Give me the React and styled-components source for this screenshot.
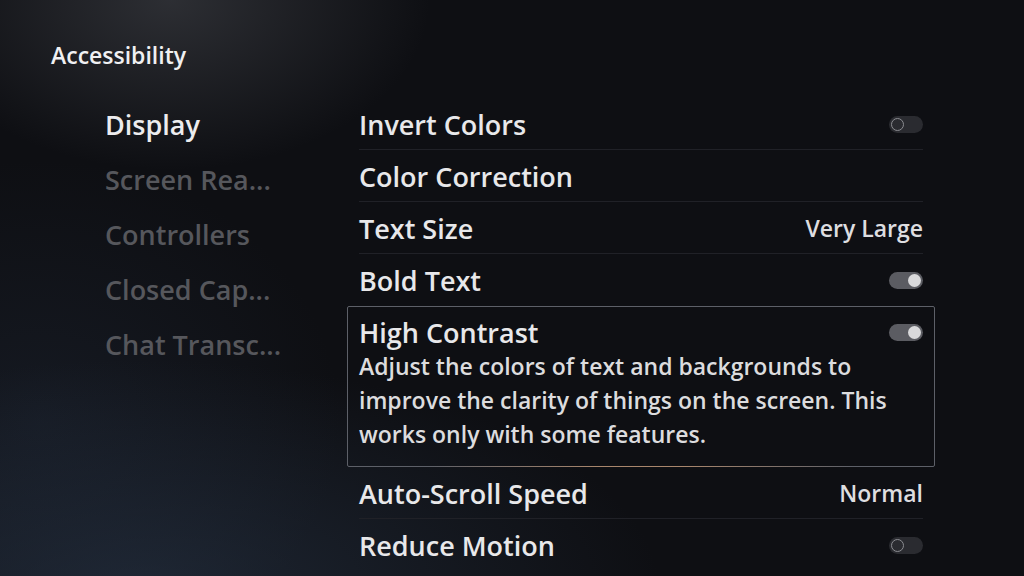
import React from 'react';
import styled, { createGlobalStyle } from 'styled-components';

const GlobalStyle = createGlobalStyle`
  html, body {
    margin: 0;
    padding: 0;
    background: #0e0f13;
  }
  * {
    box-sizing: border-box;
  }
`;

const Screen = styled.main`
  width: 100vw;
  height: 100vh;
  overflow: hidden;
  font-family: 'Open Sans', 'Noto Sans', sans-serif;
  color: #e4e4e6;
  background:
    radial-gradient(ellipse 260px 170px at 170px 0px, rgba(70, 72, 78, 0.55), transparent 100%),
    radial-gradient(ellipse 520px 230px at 140px 590px, rgba(42, 56, 76, 0.55), transparent 100%),
    radial-gradient(ellipse 300px 260px at 40px 420px, rgba(30, 38, 52, 0.45), transparent 100%),
    #0e0f13;
`;

const Title = styled.h1`
  margin: 0;
  padding: 39px 0 0 51px;
  height: 97px;
  font-size: 23px;
  line-height: 32px;
  font-weight: 600;
  color: #f0f0f2;
`;

const Body = styled.div`
  display: grid;
  grid-template-columns: 242px 588px;
  padding-left: 105px;
`;

const Nav = styled.nav`
  display: flex;
  flex-direction: column;
`;

const NavItem = styled.div`
  height: 55px;
  line-height: 55px;
  font-size: 27px;
  font-weight: 600;
  color: ${(p) => (p.$active ? '#ececee' : '#56575c')};
  white-space: nowrap;
`;

const List = styled.section`
  display: flex;
  flex-direction: column;
  margin-top: 1px;
`;

const Row = styled.div`
  position: relative;
  height: 52px;
  padding: 0 12px;
  display: flex;
  align-items: center;
  justify-content: space-between;

  &::after {
    content: '';
    position: absolute;
    left: 12px;
    right: 12px;
    bottom: 0;
    height: 1px;
    background: ${(p) => (p.$last ? 'transparent' : '#202127')};
  }
`;

const Label = styled.span`
  font-size: 27px;
  font-weight: 600;
  color: #e8e8ea;
`;

const Value = styled.span`
  font-size: 23px;
  font-weight: 600;
  color: #dedee0;
`;

const FocusBox = styled.div`
  position: relative;
  border: 1px solid #5d6068;
  border-radius: 2px;
  padding: 0 11px 15px;

  &::after {
    content: '';
    position: absolute;
    left: 80px;
    right: 80px;
    bottom: -1px;
    height: 1px;
    background: linear-gradient(90deg, transparent, rgba(200, 150, 110, 0.7) 40%, rgba(200, 150, 110, 0.7) 60%, transparent);
  }
`;

const FocusHead = styled.div`
  height: 42px;
  display: flex;
  align-items: center;
  justify-content: space-between;
  padding-top: 8px;
`;

const Description = styled.p`
  margin: 0;
  font-size: 23px;
  font-weight: 600;
  line-height: 34px;
  color: #dcdcde;
  max-width: 560px;
`;

const Track = styled.span`
  position: relative;
  width: 34px;
  height: 17px;
  border-radius: 9px;
  background: ${(p) => (p.$on ? '#5b5c62' : '#2a2b30')};
  flex-shrink: 0;
`;

const Knob = styled.span`
  position: absolute;
  top: 2px;
  width: 13px;
  height: 13px;
  border-radius: 50%;
  left: ${(p) => (p.$on ? '19px' : '2px')};
  background: ${(p) => (p.$on ? '#d9d9db' : '#2a2b30')};
  border: ${(p) => (p.$on ? 'none' : '1.5px solid #8c8d92')};
`;

function Toggle({ on }) {
  return (
    <Track $on={on}>
      <Knob $on={on} />
    </Track>
  );
}

const navItems = ['Display', 'Screen Rea...', 'Controllers', 'Closed Cap...', 'Chat Transc...'];

export default function App() {
  return (
    <>
      <GlobalStyle />
      <Screen>
        <Title>Accessibility</Title>
        <Body>
          <Nav>
            {navItems.map((item, i) => (
              <NavItem key={item} $active={i === 0}>{item}</NavItem>
            ))}
          </Nav>
          <List>
            <Row>
              <Label>Invert Colors</Label>
              <Toggle on={false} />
            </Row>
            <Row>
              <Label>Color Correction</Label>
            </Row>
            <Row>
              <Label>Text Size</Label>
              <Value>Very Large</Value>
            </Row>
            <Row $last>
              <Label>Bold Text</Label>
              <Toggle on />
            </Row>
            <FocusBox>
              <FocusHead>
                <Label>High Contrast</Label>
                <Toggle on />
              </FocusHead>
              <Description>
                Adjust the colors of text and backgrounds to improve the clarity of things on the screen. This works only with some features.
              </Description>
            </FocusBox>
            <Row>
              <Label>Auto-Scroll Speed</Label>
              <Value>Normal</Value>
            </Row>
            <Row $last>
              <Label>Reduce Motion</Label>
              <Toggle on={false} />
            </Row>
          </List>
        </Body>
      </Screen>
    </>
  );
}
